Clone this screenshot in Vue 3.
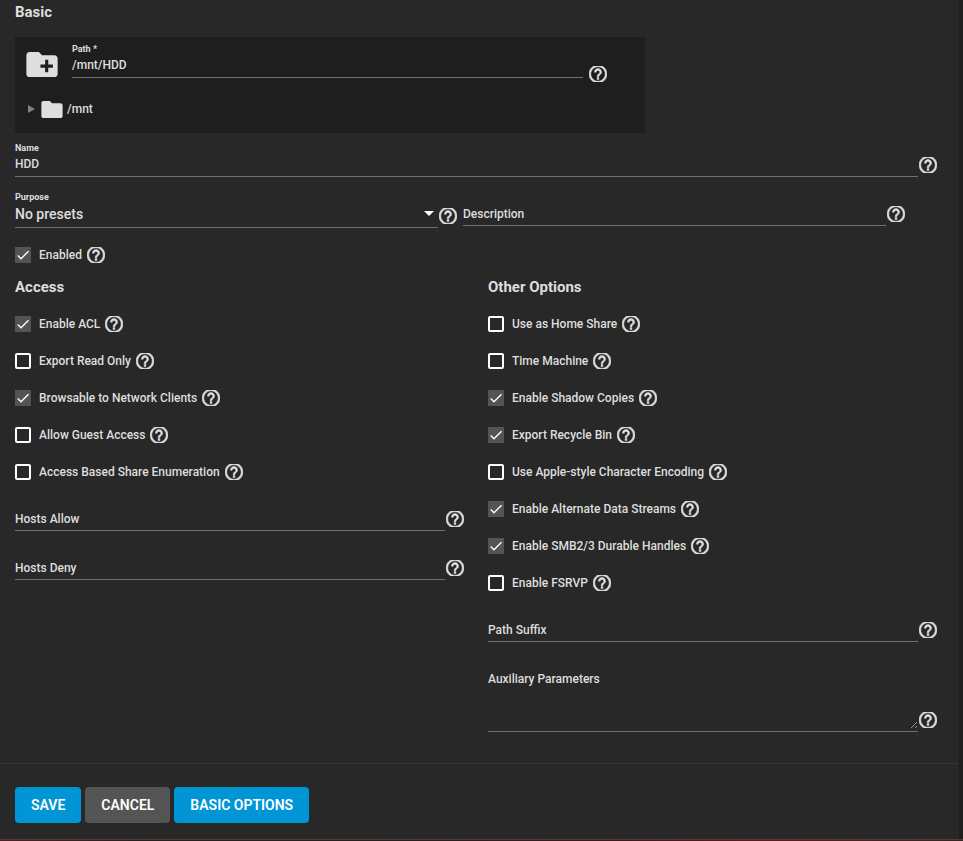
<template>
  <form class="card" @submit.prevent>
    <div class="content">
      <h2 class="first">Basic</h2>

      <div class="explorer">
        <div class="path-row">
          <svg class="new-folder" viewBox="2 4 20 16" aria-hidden="true">
            <path
              d="M20 6h-8l-2-2H4c-1.11 0-2 .89-2 2v12c0 1.11.89 2 2 2h16c1.11 0 2-.89 2-2V8c0-1.11-.89-2-2-2zm-1 8h-3v3h-2v-3h-3v-2h3V9h2v3h3z"
            />
          </svg>
          <div class="field">
            <label for="path">Path *</label>
            <input id="path" v-model="form.path" type="text" required />
          </div>
          <HelpIcon />
        </div>
        <div class="tree-row">
          <svg class="toggle" viewBox="0 0 7 8" aria-hidden="true">
            <path d="M0 0l7 4-7 4z" />
          </svg>
          <svg class="folder" viewBox="2 4 20 16" aria-hidden="true">
            <path
              d="M10 4H4c-1.11 0-2 .89-2 2v12c0 1.1.9 2 2 2h16c1.1 0 2-.9 2-2V8c0-1.11-.9-2-2-2h-8z"
            />
          </svg>
          <span>/mnt</span>
        </div>
      </div>

      <div class="field-row">
        <div class="field">
          <label for="name">Name</label>
          <input id="name" v-model="form.name" type="text" />
        </div>
        <HelpIcon />
      </div>

      <div class="preset-row">
        <div class="field-row">
          <div class="field">
            <label for="purpose">Purpose</label>
            <select id="purpose" v-model="form.purpose">
              <option>No presets</option>
            </select>
            <svg class="arrow" viewBox="0 0 10 5" aria-hidden="true">
              <path d="M0 0h10L5 5z" />
            </svg>
          </div>
          <HelpIcon />
        </div>
        <div class="field-row">
          <div class="field" :class="{ empty: !form.description }">
            <label for="description">Description</label>
            <input id="description" v-model="form.description" type="text" />
          </div>
          <HelpIcon />
        </div>
      </div>

      <CheckRow v-model="form.enabled" name="enabled" label="Enabled" />

      <div class="columns">
        <section>
          <h2>Access</h2>
          <CheckRow
            v-for="item in access"
            :key="item.name"
            v-model="item.on"
            :name="item.name"
            :label="item.label"
          />
          <div v-for="item in hosts" :key="item.name" class="field-row">
            <div class="field" :class="{ empty: !item.value }">
              <label :for="item.name">{{ item.label }}</label>
              <input :id="item.name" v-model="item.value" type="text" />
            </div>
            <HelpIcon />
          </div>
        </section>

        <section>
          <h2>Other Options</h2>
          <CheckRow
            v-for="item in other"
            :key="item.name"
            v-model="item.on"
            :name="item.name"
            :label="item.label"
          />
          <div class="field-row">
            <div class="field" :class="{ empty: !form.suffix }">
              <label for="suffix">Path Suffix</label>
              <input id="suffix" v-model="form.suffix" type="text" />
            </div>
            <HelpIcon />
          </div>
          <div class="field-row">
            <div class="field" :class="{ empty: !form.aux }">
              <label for="aux">Auxiliary Parameters</label>
              <textarea id="aux" v-model="form.aux"></textarea>
            </div>
            <HelpIcon />
          </div>
        </section>
      </div>
    </div>

    <div class="actions">
      <button type="submit" class="primary">SAVE</button>
      <button type="button">CANCEL</button>
      <button type="button" class="primary">BASIC OPTIONS</button>
    </div>
  </form>
  <div class="page-edge"></div>
</template>

<script setup>
import { h, reactive } from "vue";

const form = reactive({
  path: "/mnt/HDD",
  name: "HDD",
  purpose: "No presets",
  description: "",
  enabled: true,
  suffix: "",
  aux: "",
});

const access = reactive([
  { name: "acl", label: "Enable ACL", on: true },
  { name: "ro", label: "Export Read Only", on: false },
  { name: "browsable", label: "Browsable to Network Clients", on: true },
  { name: "guestok", label: "Allow Guest Access", on: false },
  { name: "abe", label: "Access Based Share Enumeration", on: false },
]);

const hosts = reactive([
  { name: "hostsallow", label: "Hosts Allow", value: "" },
  { name: "hostsdeny", label: "Hosts Deny", value: "" },
]);

const other = reactive([
  { name: "home", label: "Use as Home Share", on: false },
  { name: "timemachine", label: "Time Machine", on: false },
  { name: "shadowcopy", label: "Enable Shadow Copies", on: true },
  { name: "recyclebin", label: "Export Recycle Bin", on: true },
  { name: "aapl", label: "Use Apple-style Character Encoding", on: false },
  { name: "streams", label: "Enable Alternate Data Streams", on: true },
  { name: "durable", label: "Enable SMB2/3 Durable Handles", on: true },
  { name: "fsrvp", label: "Enable FSRVP", on: false },
]);

const HelpIcon = () =>
  h(
    "svg",
    {
      class: "help",
      viewBox: "2 3 20 18",
      preserveAspectRatio: "xMidYMid slice",
      "aria-hidden": "true",
    },
    [
      h("path", {
        d: "M11 18h2v-2h-2v2zm1-16C6.48 2 2 6.48 2 12s4.48 10 10 10 10-4.48 10-10S17.52 2 12 2zm0 18c-4.41 0-8-3.59-8-8s3.59-8 8-8 8 3.59 8 8-3.59 8-8 8zm0-14c-2.21 0-4 1.79-4 4h2c0-1.1.9-2 2-2s2 .9 2 2c0 2-3 1.75-3 5h2c0-2.25 3-2.5 3-5 0-2.21-1.79-4-4-4z",
      }),
    ],
  );

const CheckRow = (props, { emit }) =>
  h("div", { class: "check-row" }, [
    h("span", { class: "check" }, [
      h("input", {
        id: props.name,
        type: "checkbox",
        checked: props.modelValue,
        onChange: (e) => emit("update:modelValue", e.target.checked),
      }),
      h("svg", { viewBox: "0 0 24 24", "aria-hidden": "true" }, [
        h("path", { d: "M4.1 12.7L9 17.6 20.3 6.3" }),
      ]),
    ]),
    h("label", { for: props.name }, props.label),
    h(HelpIcon),
  ]);
CheckRow.props = ["modelValue", "name", "label"];
CheckRow.emits = ["update:modelValue"];
</script>

<style>
body {
  margin: 0;
  background: #1e1e1e;
}

.help {
  flex: none;
  width: 18px;
  height: 16px;
  fill: #dedede;
  stroke: #dedede;
  stroke-width: 0.6;
}

.check-row {
  display: flex;
  align-items: center;
  height: 37px;
}

.check-row label {
  margin: 0 5px 0 8px;
}

.check {
  display: grid;
}

.check > * {
  grid-area: 1 / 1;
  width: 16px;
  height: 16px;
}

.check input {
  appearance: none;
  box-sizing: border-box;
  margin: 0;
  border: 2px solid #fff;
  border-radius: 2px;
}

.check input:checked {
  border: 0;
  border-radius: 0;
  background: #545454;
}

.check svg {
  fill: none;
  stroke: #fff;
  stroke-width: 2;
  pointer-events: none;
}

.check input:not(:checked) + svg {
  visibility: hidden;
}
</style>

<style scoped>
.card {
  margin-right: 4px;
  background: #282828;
  color: #dedede;
  font-family: Roboto, "Liberation Sans", sans-serif;
  font-size: 12px;
  font-weight: 500;
}

.page-edge {
  height: 1px;
  border-top: 1px solid #4d3c3a;
  background: linear-gradient(
    90deg,
    #5a1a1e,
    #2c1e1e 15%,
    #2c1e1e 40%,
    #4a1418 65%,
    #6e1418 80%,
    #3a2420
  );
}

.content {
  padding: 0 22px 31px 15px;
}

h2 {
  margin: 0 0 6px;
  padding-top: 2px;
  font-size: 15px;
  font-weight: 700;
  line-height: 24px;
}

h2.first {
  margin-bottom: 13px;
  padding-top: 0;
}

.explorer {
  box-sizing: border-box;
  max-width: 630px;
  height: 96px;
  margin-bottom: 6px;
  padding: 3px 38px 0 11px;
  background: #1e1e1e;
}

.path-row {
  display: flex;
  align-items: flex-end;
}

.path-row .help {
  margin: 0 0 -4px 6px;
}

.new-folder {
  width: 32px;
  height: 25px;
  margin: 0 14px 1px 0;
  fill: #dedede;
}

.tree-row {
  display: flex;
  align-items: center;
  margin-top: 21px;
  padding-left: 2px;
  line-height: 20px;
}

.toggle {
  width: 7px;
  height: 8px;
  margin-right: 6px;
  fill: #808080;
}

.folder {
  width: 22px;
  height: 17px;
  margin-right: 4px;
  fill: #dedede;
}

.field-row {
  display: flex;
  align-items: flex-end;
}

.field-row + .field-row {
  margin-top: 11px;
}

.check-row + .field-row {
  margin-top: 3px;
}

.field-row .help {
  margin: 0 0 4px 1px;
}

.field {
  flex: 1;
  min-width: 0;
  display: grid;
  grid-template-columns: minmax(0, 1fr);
  grid-template-rows: 16px auto;
  border-bottom: 1px solid #707070;
}

.field label {
  font-size: 9px;
  font-weight: 700;
  line-height: 18px;
}

/* the label rests inside the control until there is a value */
.field.empty label {
  grid-area: 2 / 1;
  z-index: 1;
  font-size: 12px;
  font-weight: 500;
  line-height: 20px;
  pointer-events: none;
}

input[type="text"],
select,
textarea {
  grid-area: 2 / 1;
  box-sizing: border-box;
  width: 100%;
  height: 21px;
  margin: 0;
  padding: 0 0 3px;
  border: 0;
  border-radius: 0;
  background: none;
  color: inherit;
  font: inherit;
  outline: none;
}

select {
  appearance: none;
  height: 23px;
  font-size: 14px;
}

textarea {
  display: block;
  height: 60px;
  margin-bottom: 2px;
  resize: vertical;
}

.arrow {
  grid-area: 2 / 1;
  align-self: center;
  justify-self: end;
  width: 10px;
  height: 5px;
  margin: 0 4px 4px 0;
  fill: #fff;
  pointer-events: none;
}

.preset-row {
  display: grid;
  grid-template-columns: 1fr 1fr;
  align-items: start;
  gap: 6px;
  margin: 11px 32px 8px 0;
}

.preset-row .field-row {
  margin: 0;
}

.columns {
  display: grid;
  grid-template-columns: 1fr 1fr;
  gap: 24px;
}

.actions {
  display: flex;
  gap: 4px;
  padding: 23px 15px 16px;
  border-top: 1px solid #323232;
}

button {
  height: 36px;
  padding: 0 16px;
  border: 0;
  border-radius: 4px;
  background: #545454;
  color: #fff;
  font: inherit;
  font-size: 14px;
  font-weight: 600;
}

button.primary {
  background: #0095d5;
}
</style>
